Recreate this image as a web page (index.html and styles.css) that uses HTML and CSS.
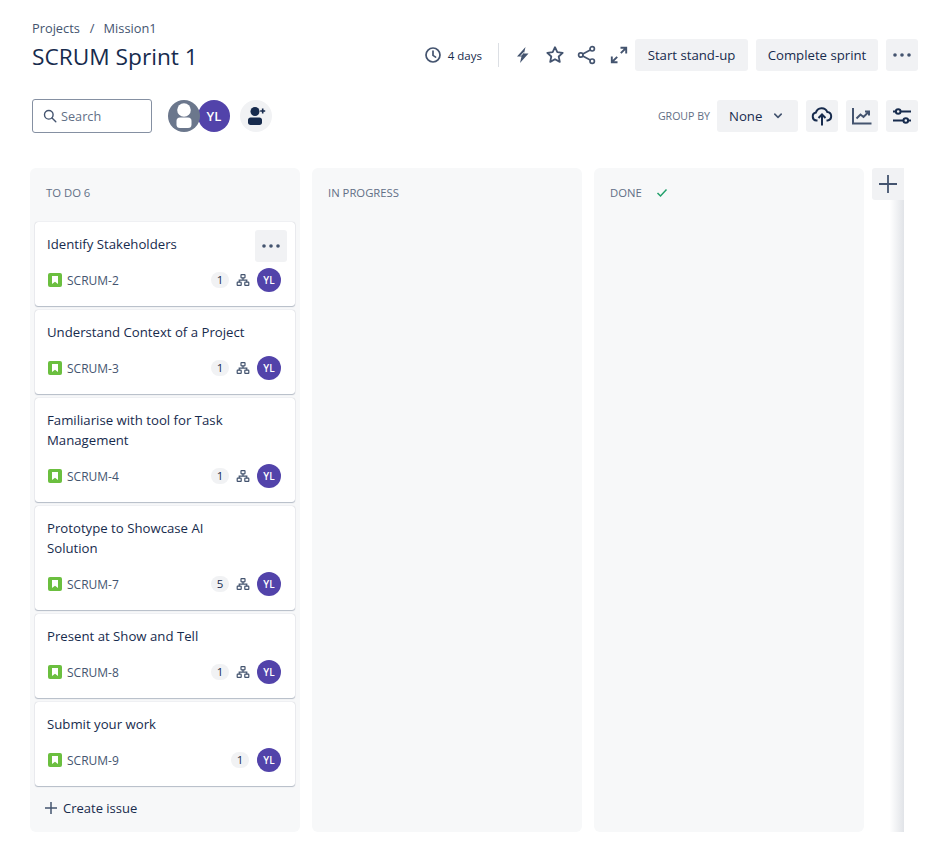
FILE: index.html
```html
<!DOCTYPE html>
<html lang="en">
<head>
<meta charset="utf-8">
<title>SCRUM Sprint 1</title>
<link rel="stylesheet" href="styles.css">
</head>
<body>
<svg class="defs" width="0" height="0">
  <symbol id="story" viewBox="0 0 14 14"><rect width="14" height="14" rx="2" fill="#6bbf3f"/><path d="M4 3h6v8L7 8.800 4 11z" fill="#fff"/></symbol>
  <symbol id="tree" viewBox="0 0 14 14"><g fill="none" stroke="#44546f" stroke-width="1.200"><rect x="5" y="1.600" width="4" height="3.200" rx=".5"/><rect x="1.200" y="9.200" width="4" height="3.200" rx=".5"/><rect x="8.800" y="9.200" width="4" height="3.200" rx=".5"/><path d="M7 4.800v2.400M3.200 9.200V7.200h7.600v2"/></g></symbol>
</svg>
<main class="page">
  <header class="head">
    <div class="titles">
      <nav class="crumbs"><span>Projects</span><span class="slash">/</span><span>Mission1</span></nav>
      <h1>SCRUM Sprint 1</h1>
    </div>
    <div class="actions">
      <svg class="ic clock" viewBox="0 0 18 18" width="18" height="18"><circle cx="9" cy="9" r="7" fill="none" stroke="#44546f" stroke-width="1.700"/><path d="M9 5v4.400l2.600 1.700" fill="none" stroke="#44546f" stroke-width="1.700" stroke-linecap="round"/></svg>
      <span class="days">4 days</span>
      <span class="sep"></span>
      <svg class="ic bolt" viewBox="0 0 18 18" width="18" height="18"><path d="M11.500 1 3 10.500h4.500L6 17l8.500-9.500H10L11.500 1z" fill="#44546f"/><path d="M10 6.200 6.800 9.800" stroke="#fff" stroke-width="1"/></svg>
      <svg class="ic star" viewBox="0 0 20 20" width="20" height="20"><path d="m10 2.200 2.300 5 5.400.6-4 3.700 1.100 5.400-4.800-2.700-4.800 2.700 1.100-5.400-4-3.700 5.400-.6z" fill="none" stroke="#44546f" stroke-width="1.800" stroke-linejoin="round"/></svg>
      <svg class="ic share" viewBox="0 0 20 20" width="20" height="20"><g fill="none" stroke="#44546f" stroke-width="1.700"><circle cx="15.200" cy="3.800" r="2.200"/><circle cx="15.200" cy="16.200" r="2.200"/><circle cx="3.800" cy="10" r="2.200"/><path d="m5.800 8.900 7.400-4M5.800 11.100l7.400 4"/></g></svg>
      <svg class="ic expand" viewBox="0 0 18 18" width="18" height="18"><g fill="none" stroke="#44546f" stroke-width="1.900"><path d="M10.500 1.800h5.700v5.700M16 2 10.800 7.200M7.500 16.200H1.800v-5.700M2 16l5.200-5.200"/></g></svg>
      <button class="btn start">Start stand-up</button>
      <button class="btn complete">Complete sprint</button>
      <button class="btn square"><svg viewBox="0 0 18 4" width="18" height="4"><g fill="#44546f"><circle cx="2" cy="2" r="1.800"/><circle cx="9" cy="2" r="1.800"/><circle cx="16" cy="2" r="1.800"/></g></svg></button>
    </div>
  </header>

  <section class="toolbar">
    <div class="left">
      <label class="search">
        <svg viewBox="0 0 14 14" width="14" height="14"><circle cx="5.800" cy="5.800" r="4.300" fill="none" stroke="#44546f" stroke-width="1.400"/><path d="m9 9 3.800 3.800" stroke="#44546f" stroke-width="1.400" stroke-linecap="round"/></svg>
        <span>Search</span>
      </label>
      <div class="people">
        <span class="avatar-anon"><svg viewBox="0 0 32 32" width="32" height="32"><circle cx="16" cy="16" r="16" fill="#6b778c"/><circle cx="16" cy="10" r="6.800" fill="#fff"/><rect x="8.500" y="17.600" width="15" height="10.400" rx="3.500" fill="#fff"/></svg></span>
        <span class="avatar big">YL</span>
      </div>
      <button class="add"><svg viewBox="0 0 20 20" width="20" height="20"><circle cx="9" cy="5.500" r="4.500" fill="#172b4d"/><path d="M2 14c0-1.500 1.200-2.500 2.500-2.500h9c1.300 0 2.500 1 2.500 2.500v2.500c0 1.500-1 2.500-2.500 2.500h-9C3 19 2 18 2 16.500z" fill="#172b4d"/><path d="M16.700 2.500v5M14.200 5h5" stroke="#172b4d" stroke-width="1.600"/></svg></button>
    </div>
    <div class="right">
      <span class="group-label">GROUP BY</span>
      <button class="btn select">None<svg viewBox="0 0 10 7" width="8" height="6"><path d="m1 1.200 4 4 4-4" fill="none" stroke="#44546f" stroke-width="2" stroke-linecap="round" stroke-linejoin="round"/></svg></button>
      <button class="btn square"><svg viewBox="0 0 22 20" width="22" height="20"><path d="M6.500 14.500H5.500a4 4 0 0 1-.6-7.900 6 6 0 0 1 11.400-.6 4.300 4.300 0 0 1 .4 8.500h-1.200" fill="none" stroke="#172b4d" stroke-width="2"/><path d="M11 19.500V9M7.500 12 11 8.500l3.500 3.500" fill="none" stroke="#172b4d" stroke-width="2"/></svg></button>
      <button class="btn square"><svg viewBox="0 0 20 18" width="20" height="18"><path d="M1 1v15.500h18.500" fill="none" stroke="#44546f" stroke-width="2"/><path d="m4.500 11.500 4-4 3 2.500 5-5M13 4.500h4v4" fill="none" stroke="#44546f" stroke-width="2"/></svg></button>
      <button class="btn square"><svg viewBox="0 0 20 16" width="20" height="16"><g fill="none" stroke="#172b4d" stroke-width="2"><path d="M1 3.500h2.500M9 3.500h10M1 12.500h10M16.500 12.500H19"/><circle cx="6.200" cy="3.500" r="2.300"/><circle cx="13.800" cy="12.500" r="2.300"/></g></svg></button>
    </div>
  </section>

  <section class="board">
    <div class="column">
      <h2 class="col-title">TO DO 6</h2>
      <div class="cards">
        <article class="card">
          <p class="summary">Identify Stakeholders</p>
          <button class="more"><svg viewBox="0 0 18 4" width="18" height="4"><g fill="#44546f"><circle cx="2" cy="2" r="1.800"/><circle cx="9" cy="2" r="1.800"/><circle cx="16" cy="2" r="1.800"/></g></svg></button>
          <div class="meta"><svg class="story" width="14" height="14"><use href="#story"/></svg><span class="key">SCRUM-2</span><span class="count">1</span><svg class="tree" width="14" height="14"><use href="#tree"/></svg><span class="avatar">YL</span></div>
        </article>
        <article class="card">
          <p class="summary">Understand Context of a Project</p>
          <div class="meta"><svg class="story" width="14" height="14"><use href="#story"/></svg><span class="key">SCRUM-3</span><span class="count">1</span><svg class="tree" width="14" height="14"><use href="#tree"/></svg><span class="avatar">YL</span></div>
        </article>
        <article class="card">
          <p class="summary">Familiarise with tool for Task Management</p>
          <div class="meta"><svg class="story" width="14" height="14"><use href="#story"/></svg><span class="key">SCRUM-4</span><span class="count">1</span><svg class="tree" width="14" height="14"><use href="#tree"/></svg><span class="avatar">YL</span></div>
        </article>
        <article class="card">
          <p class="summary">Prototype to Showcase AI Solution</p>
          <div class="meta"><svg class="story" width="14" height="14"><use href="#story"/></svg><span class="key">SCRUM-7</span><span class="count">5</span><svg class="tree" width="14" height="14"><use href="#tree"/></svg><span class="avatar">YL</span></div>
        </article>
        <article class="card">
          <p class="summary">Present at Show and Tell</p>
          <div class="meta"><svg class="story" width="14" height="14"><use href="#story"/></svg><span class="key">SCRUM-8</span><span class="count">1</span><svg class="tree" width="14" height="14"><use href="#tree"/></svg><span class="avatar">YL</span></div>
        </article>
        <article class="card">
          <p class="summary">Submit your work</p>
          <div class="meta"><svg class="story" width="14" height="14"><use href="#story"/></svg><span class="key">SCRUM-9</span><span class="count">1</span><span class="avatar">YL</span></div>
        </article>
      </div>
      <div class="create"><svg viewBox="0 0 14 14" width="14" height="14"><path d="M7 1v12M1 7h12" stroke="#44546f" stroke-width="1.500"/></svg>Create issue</div>
    </div>
    <div class="column">
      <h2 class="col-title">IN PROGRESS</h2>
    </div>
    <div class="column">
      <h2 class="col-title">DONE<svg class="check" viewBox="0 0 12 10" width="12" height="10"><path d="m1.500 5 3 3 6-6.500" fill="none" stroke="#22a06b" stroke-width="1.500"/></svg></h2>
    </div>
    <div class="rail">
      <button class="plus"><svg viewBox="0 0 18 18" width="18" height="18"><path d="M9 0v18M0 9h18" stroke="#44546f" stroke-width="1.800"/></svg></button>
    </div>
  </section>
</main>
</body>
</html>
```

FILE: styles.css
```css
* { box-sizing: border-box; }
html, body { margin: 0; padding: 0; background: #fff; }
body {
  width: 941px;
  height: 843px;
  overflow: hidden;
  font-family: "Open Sans", "Noto Sans", "Liberation Sans", sans-serif;
  color: #172b4d;
}
.defs { position: absolute; }
button { font: inherit; color: inherit; border: 0; padding: 0; }
.page { padding: 20px 23px 0 30px; }

.head { display: flex; justify-content: space-between; align-items: flex-start; padding-left: 2px; height: 80px; }
.crumbs { display: flex; font-size: 12.800px; line-height: 16px; color: #44546f; }
.slash { margin: 0 9px 0 10px; }
h1 { margin: 5px 0 0; font-size: 22.700px; font-weight: 400; line-height: 32px; color: #172b4d; }
.actions { display: flex; align-items: center; margin-top: 19px; height: 32px; }
.clock { margin-right: 6px; }
.days { font-size: 11.500px; color: #172b4d; }
.sep { width: 1px; height: 24px; background: #dcdfe4; margin: 0 15px 0 16px; }
.star { margin-left: 13px; }
.share { margin-left: 12px; }
.expand { margin: 0 7px 0 13px; }
.btn {
  display: flex; align-items: center; justify-content: center;
  height: 32px; padding: 0 12px; margin-left: 8px;
  background: #f1f2f4; border-radius: 3px;
  font-size: 13.200px; color: #172b4d;
}
.actions .expand + .btn { margin-left: 0; }
.start { width: 113px; padding: 0; }
.complete { width: 122px; padding: 0; }
.square { width: 32px; padding: 0; }

.toolbar { display: flex; justify-content: space-between; align-items: center; padding-left: 2px; height: 32px; }
.left, .right { display: flex; align-items: center; }
.search {
  display: flex; align-items: center; gap: 4px;
  width: 120px; height: 34px; padding-left: 10px;
  border: 1px solid #8590a2; border-radius: 3px;
  font-size: 12.700px; color: #626f86;
}
.people { display: flex; margin-left: 16px; }
.avatar-anon { width: 32px; height: 32px; display: block; position: relative; z-index: 1; }
.avatar-anon svg { display: block; }
.avatar {
  display: flex; align-items: center; justify-content: center;
  width: 24px; height: 24px; border-radius: 50%;
  background: #5243aa; color: #fff; font-size: 10px; font-weight: 600;
}
.avatar.big { width: 32px; height: 32px; font-size: 13px; margin-left: -2px; }
.add {
  width: 32px; height: 32px; margin-left: 10px; border-radius: 50%;
  background: #f1f2f4; display: flex; align-items: center; justify-content: center;
}
.group-label { font-size: 10.600px; color: #626f86; margin-right: 7px; }
.select { width: 81px; padding: 0 0 0 12px; gap: 12px; margin-left: 0; justify-content: flex-start; }
.right .square { margin-left: 8px; }

.board { position: relative; display: flex; gap: 12px; margin-top: 36px; }
.column { width: 270px; height: 664px; padding: 0 5px; border-radius: 6px; background: #f7f8f9; flex: none; }
.col-title {
  display: flex; align-items: center; margin: 0; height: 54px; padding: 0 0 5px 11px;
  font-size: 11.300px; font-weight: 400; color: #626f86;
}
.check { margin-left: 14px; }
.cards { display: flex; flex-direction: column; gap: 4px; }
.card {
  position: relative; background: #fff; border-radius: 3px; padding: 12px 14px 14px 12px;
  box-shadow: 0 1px 1px #091e4240, 0 0 1px #091e424f;
}
.summary { margin: 0; width: 205px; font-size: 13.200px; line-height: 20px; color: #172b4d; }
.more {
  position: absolute; top: 8px; right: 8px; width: 32px; height: 32px;
  display: flex; align-items: center; justify-content: center;
  background: #f1f2f4; border-radius: 3px;
}
.meta { display: flex; align-items: center; height: 24px; margin-top: 14px; }
.story { margin-left: 1px; flex: none; }
.key { margin-left: 5px; font-size: 12px; color: #44546f; }
.count {
  margin-left: auto; min-width: 18px; height: 16px; line-height: 16px; text-align: center;
  border-radius: 8px; background: #f1f2f4; font-size: 11.500px; color: #172b4d;
}
.tree { margin: 0 7px; flex: none; }
.count + .avatar { margin-left: 8px; }
.create { display: flex; align-items: center; gap: 5px; height: 32px; margin-top: 6px; padding-left: 9px; font-size: 13px; color: #172b4d; }

.rail { position: relative; width: 32px; height: 664px; margin-left: -4px; flex: none; background: linear-gradient(to right, #fff0 55%, #091e421f); }
.plus { display: flex; align-items: center; justify-content: center; width: 32px; height: 32px; background: #f1f2f4; border-radius: 3px 0 0 3px; }
```
